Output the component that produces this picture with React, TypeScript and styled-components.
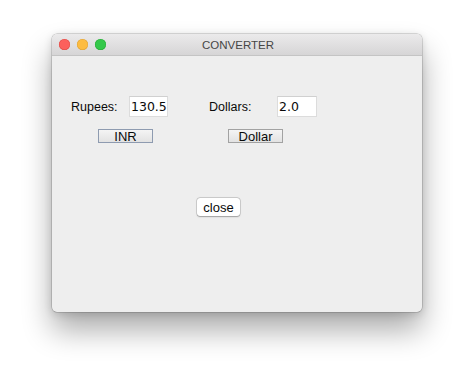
import React from "react";
import styled, { createGlobalStyle } from "styled-components";

const Global = createGlobalStyle`
  html, body { margin: 0; padding: 0; background: #ffffff; }
  body { width: 474px; height: 381px; overflow: hidden; font-family: "Liberation Sans", Arial, sans-serif; }
`;

const Page = styled.div`
  width: 474px;
  height: 381px;
  padding: 34px 0 0 52px;
  box-sizing: border-box;
`;

const Window = styled.div`
  width: 370px;
  height: 278px;
  border-radius: 5px;
  background: #eeeeee;
  overflow: hidden;
  box-shadow: 0 0 0 0.5px rgba(0, 0, 0, 0.25), 0 18px 30px rgba(0, 0, 0, 0.33), 0 2px 8px rgba(0, 0, 0, 0.14);
  display: flex;
  flex-direction: column;
`;

const TitleBar = styled.div`
  height: 22px;
  flex: none;
  box-sizing: border-box;
  border-bottom: 1px solid #c4c4c4;
  background: linear-gradient(#ebeaeb, #d6d5d6);
  display: flex;
  align-items: center;
  position: relative;
`;

const Lights = styled.div`
  display: flex;
  gap: 7px;
  padding-left: 7px;
`;

const Light = styled.span<{ $c: string; $b: string }>`
  width: 11px;
  height: 11px;
  border-radius: 50%;
  background: ${(p) => p.$c};
  box-shadow: inset 0 0 0 0.5px ${(p) => p.$b};
`;

const Title = styled.div`
  position: absolute;
  left: 0;
  right: 0;
  top: 0;
  bottom: 0;
  display: flex;
  align-items: center;
  justify-content: center;
  padding-left: 2px;
  font-size: 11.5px;
  color: #464646;
  pointer-events: none;
`;

const Body = styled.div`
  flex: 1;
  display: flex;
  flex-direction: column;
  padding-top: 40px;
`;

const FieldRow = styled.div`
  display: flex;
  align-items: center;
  padding-left: 19px;
`;

const Label = styled.span<{ $w: number }>`
  width: ${(p) => p.$w}px;
  font-size: 12.5px;
  color: #0a0a0a;
`;

const Field = styled.div<{ $w: number }>`
  width: ${(p) => p.$w}px;
  height: 21px;
  box-sizing: border-box;
  background: #ffffff;
  border: 1px solid #dcdcdc;
  border-top-color: #d0d0d0;
  font-family: "DejaVu Sans", sans-serif;
  font-size: 12.5px;
  color: #0a0a0a;
  padding-left: 1px;
  display: flex;
  align-items: center;
`;

const Spacer = styled.div<{ $w: number }>`
  width: ${(p) => p.$w}px;
  flex: none;
`;

const ButtonRow = styled.div`
  display: flex;
  padding-left: 46px;
  margin-top: 12px;
`;

const FlatButton = styled.div<{ $focus?: boolean }>`
  width: 55px;
  height: 14px;
  box-sizing: border-box;
  border: 1px solid ${(p) => (p.$focus ? "#8e9bb0" : "#a2a2a2")};
  background: linear-gradient(#f4f4f4, #e2e2e2);
  font-size: 13px;
  color: #0a0a0a;
  display: flex;
  align-items: center;
  justify-content: center;
  line-height: 1;
`;

const CloseRow = styled.div`
  display: flex;
  padding-left: 145px;
  margin-top: 55px;
`;

const PushButton = styled.div`
  width: 43px;
  height: 18px;
  box-sizing: border-box;
  border-radius: 3px;
  background: #ffffff;
  box-shadow: 0 0 0 0.5px rgba(0, 0, 0, 0.22), 0 0.5px 1.5px rgba(0, 0, 0, 0.25);
  font-size: 13px;
  color: #0a0a0a;
  display: flex;
  align-items: center;
  justify-content: center;
`;

export default function App() {
  return (
    <>
      <Global />
      <Page>
        <Window>
          <TitleBar>
            <Lights>
              <Light $c="#fc605c" $b="#de4a45" />
              <Light $c="#fdbc40" $b="#dea236" />
              <Light $c="#34c84a" $b="#27aa35" />
            </Lights>
            <Title>CONVERTER</Title>
          </TitleBar>
          <Body>
            <FieldRow>
              <Label $w={58}>Rupees:</Label>
              <Field $w={39}>130.5</Field>
              <Spacer $w={41} />
              <Label $w={68}>Dollars:</Label>
              <Field $w={40}>2.0</Field>
            </FieldRow>
            <ButtonRow>
              <FlatButton $focus>INR</FlatButton>
              <Spacer $w={75} />
              <FlatButton>Dollar</FlatButton>
            </ButtonRow>
            <CloseRow>
              <PushButton>close</PushButton>
            </CloseRow>
          </Body>
        </Window>
      </Page>
    </>
  );
}
